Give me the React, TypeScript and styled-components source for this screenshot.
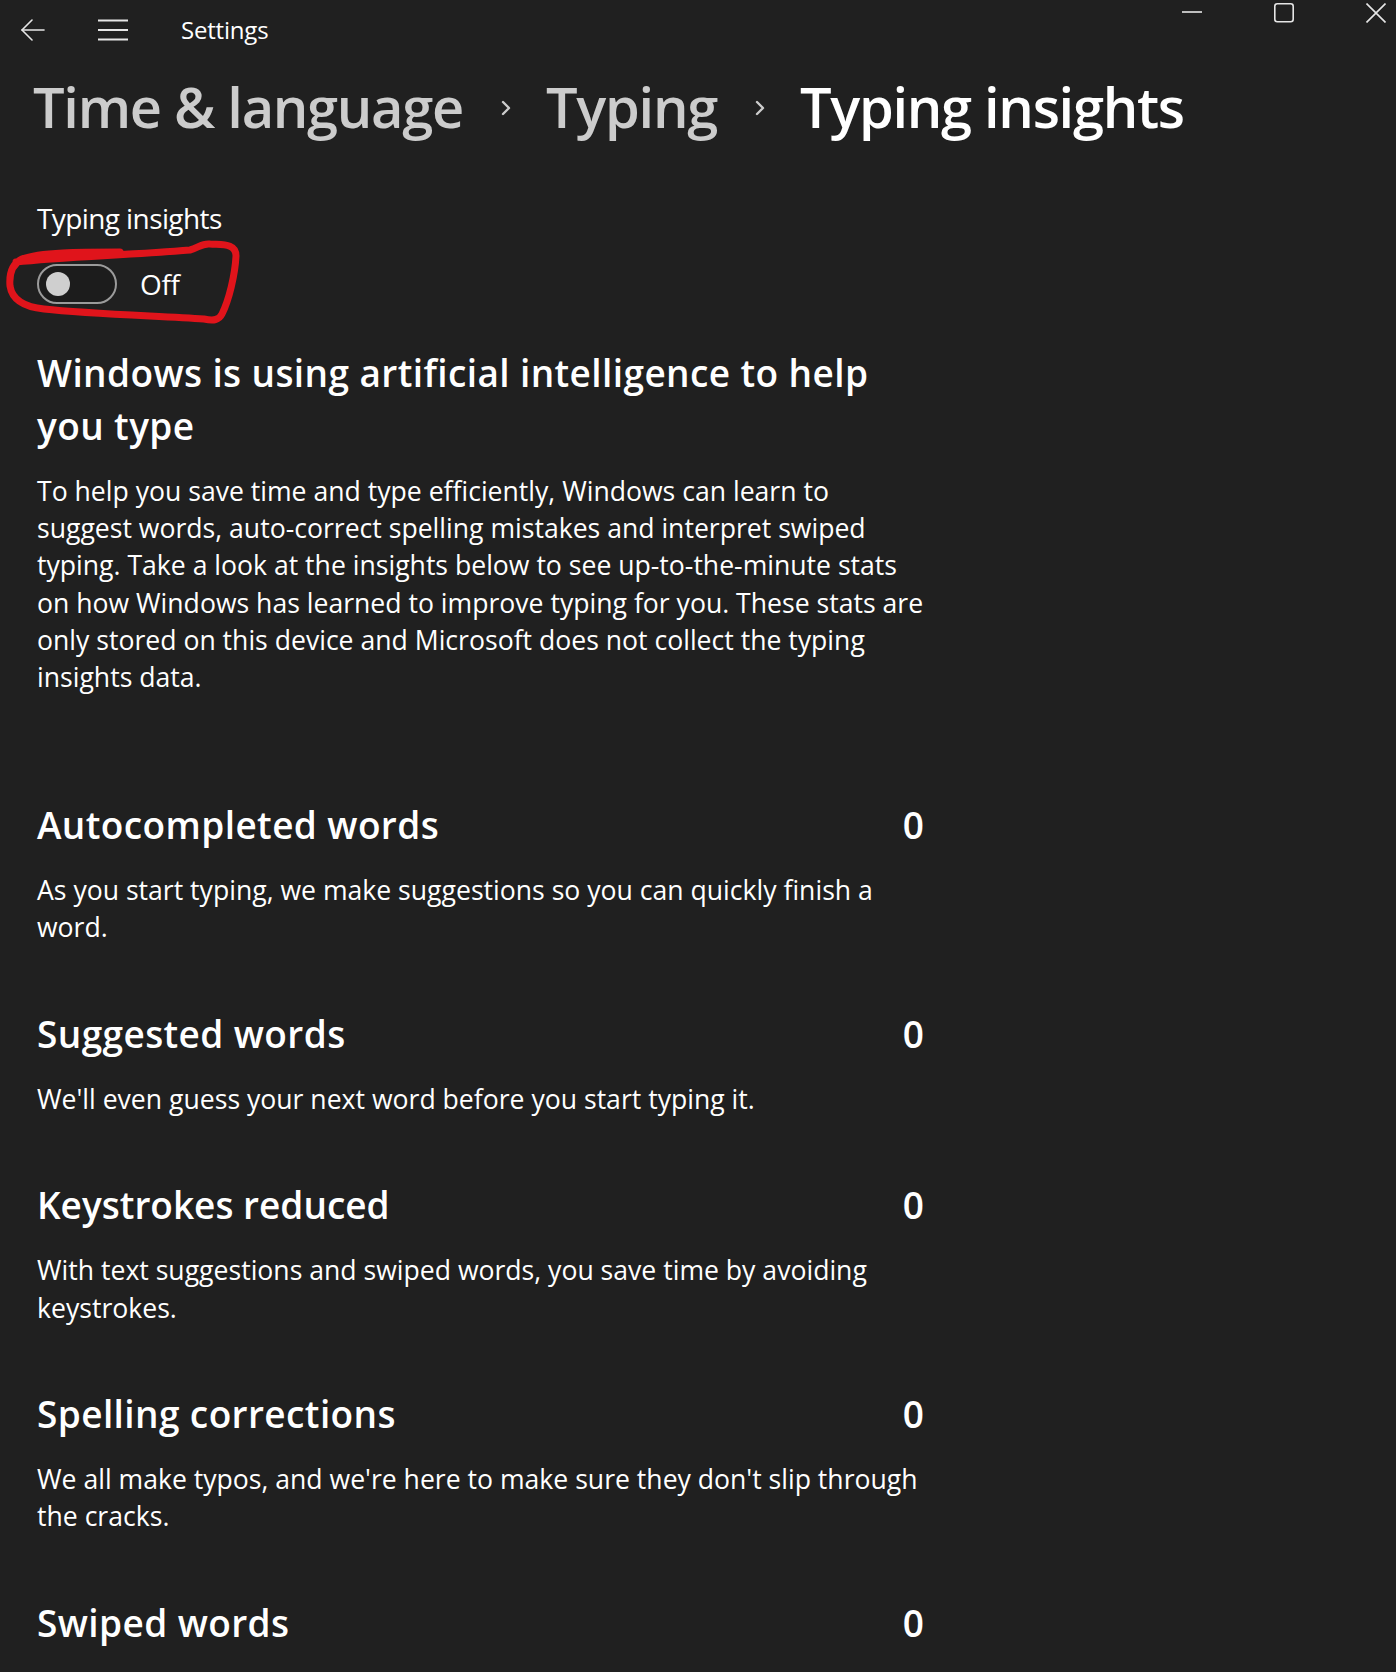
import React from "react";
import styled, { createGlobalStyle } from "styled-components";

const GlobalStyle = createGlobalStyle`
  html, body {
    margin: 0;
    padding: 0;
    background: #202020;
  }
  body {
    font-family: "Open Sans", "Noto Sans", "Liberation Sans", sans-serif;
    color: #ffffff;
    -webkit-font-smoothing: antialiased;
  }
  * { box-sizing: border-box; }
`;

const Page = styled.div`
  min-height: 1672px;
  background: #202020;
  overflow: hidden;
`;

const TitleBar = styled.header`
  display: flex;
  align-items: center;
  height: 60px;
  padding-left: 21px;
`;

const IconButton = styled.span<{ $gap?: number }>`
  display: flex;
  align-items: center;
  margin-right: ${(p) => p.$gap ?? 0}px;
  color: #e6e6e6;
`;

const AppTitle = styled.span`
  font-size: 24px;
  line-height: 60px;
  letter-spacing: -0.2px;
  color: #ffffff;
`;

const WindowControls = styled.div`
  display: flex;
  align-self: flex-start;
  margin-left: auto;
  padding-top: 3px;
  padding-right: 10px;
  gap: 72px;
  color: #e6e6e6;
`;

const Content = styled.main`
  padding-left: 37px;
  width: 924px;
`;

const Breadcrumb = styled.nav`
  display: flex;
  align-items: center;
  margin-top: 8px;
  margin-left: -4px;
  height: 76px;
  white-space: nowrap;
`;

const Crumb = styled.span<{ $current?: boolean }>`
  font-size: 56px;
  line-height: 76px;
  font-weight: 600;
  letter-spacing: -1.3px;
  color: ${(p) => (p.$current ? "#ffffff" : "#cccccc")};
`;

const CrumbChevron = styled.span`
  display: flex;
  align-items: center;
  margin: 4px 34px 0 37px;
  color: #cccccc;
`;

const FieldLabel = styled.div`
  margin-top: 54px;
  font-size: 28px;
  line-height: 40px;
  letter-spacing: -0.6px;
`;

const ToggleRow = styled.div`
  position: relative;
  display: flex;
  align-items: center;
  margin-top: 26px;
  height: 40px;
  gap: 23px;
`;

const Track = styled.span`
  display: flex;
  align-items: center;
  width: 80px;
  height: 40px;
  border: 2px solid #9b9b9b;
  border-radius: 20px;
  background: #1c1c1c;
  padding-left: 7px;
`;

const Knob = styled.span`
  width: 24px;
  height: 24px;
  border-radius: 50%;
  background: #cfcfcf;
`;

const ToggleText = styled.span`
  font-size: 28px;
  line-height: 40px;
  letter-spacing: -0.3px;
`;

const Annotation = styled.svg`
  position: absolute;
  left: -37px;
  top: -34px;
  width: 260px;
  height: 110px;
  pointer-events: none;
  overflow: visible;
`;

const Heading = styled.h2`
  margin: 42px 0 0 0;
  font-size: 37px;
  line-height: 53px;
  font-weight: 600;
  letter-spacing: 0.4px;
`;

const Paragraph = styled.p`
  margin: 21px 0 0 0;
  font-size: 26.6px;
  line-height: 37.2px;
  font-weight: 400;
`;

const Line = styled.span`
  display: block;
  white-space: nowrap;
`;

const Stats = styled.section`
  display: flex;
  flex-direction: column;
  margin-top: 102px;
  gap: 60.3px;
`;

const Stat = styled.div`
  display: flex;
  flex-direction: column;
  gap: 21px;
`;

const StatHeader = styled.div`
  display: flex;
  justify-content: space-between;
  align-items: center;
`;

const StatTitle = styled.h3<{ $tight?: boolean }>`
  margin: 0;
  font-size: 37px;
  line-height: 53px;
  font-weight: 600;
  letter-spacing: ${(p) => (p.$tight ? "0" : "0.4px")};
`;

const StatValue = styled.span`
  font-size: 37px;
  line-height: 53px;
  font-weight: 600;
`;

const StatDesc = styled.p`
  margin: 0;
  font-size: 26.6px;
  line-height: 37.2px;
`;

const BackIcon = () => (
  <svg width="24" height="22" viewBox="0 0 24 22" fill="none" stroke="currentColor" strokeWidth="1.6" strokeLinecap="round" strokeLinejoin="round">
    <path d="M1 11H23" />
    <path d="M11 1L1 11L11 21" />
  </svg>
);

const MenuIcon = () => (
  <svg width="30" height="22" viewBox="0 0 30 22" fill="none" stroke="currentColor" strokeWidth="2">
    <path d="M0 1.5H30" />
    <path d="M0 11H30" />
    <path d="M0 20.5H30" />
  </svg>
);

const MinimizeIcon = () => (
  <svg width="20" height="20" viewBox="0 0 20 20" fill="none" stroke="currentColor" strokeWidth="1.6">
    <path d="M0 9H20" />
  </svg>
);

const MaximizeIcon = () => (
  <svg width="20" height="20" viewBox="0 0 20 20" fill="none" stroke="currentColor" strokeWidth="1.6">
    <rect x="0.8" y="0.8" width="18.4" height="18" rx="2.5" />
  </svg>
);

const CloseIcon = () => (
  <svg width="20" height="20" viewBox="0 0 20 20" fill="none" stroke="currentColor" strokeWidth="1.6">
    <path d="M0.5 0.5L19.5 19.5M19.5 0.5L0.5 19.5" />
  </svg>
);

const Chevron = () => (
  <svg width="12" height="22" viewBox="0 0 12 22" fill="none" stroke="currentColor" strokeWidth="2.4" strokeLinecap="round" strokeLinejoin="round">
    <path d="M3 5L9 11L3 17" />
  </svg>
);

const headingLines = ["Windows is using artificial intelligence to help", "you type"];

const introLines = [
  "To help you save time and type efficiently, Windows can learn to",
  "suggest words, auto-correct spelling mistakes and interpret swiped",
  "typing. Take a look at the insights below to see up-to-the-minute stats",
  "on how Windows has learned to improve typing for you. These stats are",
  "only stored on this device and Microsoft does not collect the typing",
  "insights data.",
];

const stats: { title: string; value: number; desc: string[]; tight?: boolean }[] = [
  {
    title: "Autocompleted words",
    value: 0,
    desc: ["As you start typing, we make suggestions so you can quickly finish a", "word."],
  },
  {
    title: "Suggested words",
    value: 0,
    desc: ["We'll even guess your next word before you start typing it."],
  },
  {
    title: "Keystrokes reduced",
    value: 0,
    tight: true,
    desc: ["With text suggestions and swiped words, you save time by avoiding", "keystrokes."],
  },
  {
    title: "Spelling corrections",
    value: 0,
    desc: ["We all make typos, and we're here to make sure they don't slip through", "the cracks."],
  },
  {
    title: "Swiped words",
    value: 0,
    desc: [],
  },
];

export default function App() {
  return (
    <>
      <GlobalStyle />
      <Page>
        <TitleBar>
          <IconButton $gap={53}>
            <BackIcon />
          </IconButton>
          <IconButton $gap={53}>
            <MenuIcon />
          </IconButton>
          <AppTitle>Settings</AppTitle>
          <WindowControls>
            <MinimizeIcon />
            <MaximizeIcon />
            <CloseIcon />
          </WindowControls>
        </TitleBar>
        <Content>
          <Breadcrumb>
            <Crumb>Time &amp; language</Crumb>
            <CrumbChevron>
              <Chevron />
            </CrumbChevron>
            <Crumb>Typing</Crumb>
            <CrumbChevron>
              <Chevron />
            </CrumbChevron>
            <Crumb $current>Typing insights</Crumb>
          </Breadcrumb>

          <FieldLabel>Typing insights</FieldLabel>
          <ToggleRow>
            <Track>
              <Knob />
            </Track>
            <ToggleText>Off</ToggleText>
            <Annotation viewBox="0 230 260 110">
              <path
                d="M16 262 C 60 257, 130 255, 190 250 C 198 248, 202 243, 210 244 C 222 245, 236 243, 236 256 C 235 275, 229 300, 222 314 C 219 320, 214 321, 204 319 C 160 316, 90 314, 44 309 C 24 307, 12 299, 10 286 C 9 274, 12 264, 22 259 C 40 252, 80 252, 120 252"
                fill="none"
                stroke="#e0141b"
                strokeWidth="7"
                strokeLinecap="round"
                strokeLinejoin="round"
              />
            </Annotation>
          </ToggleRow>

          <Heading>
            {headingLines.map((l) => (
              <Line key={l}>{l}</Line>
            ))}
          </Heading>
          <Paragraph>
            {introLines.map((l) => (
              <Line key={l}>{l}</Line>
            ))}
          </Paragraph>

          <Stats>
            {stats.map((s) => (
              <Stat key={s.title}>
                <StatHeader>
                  <StatTitle $tight={s.tight}>{s.title}</StatTitle>
                  <StatValue>{s.value}</StatValue>
                </StatHeader>
                {s.desc.length > 0 && (
                  <StatDesc>
                    {s.desc.map((l) => (
                      <Line key={l}>{l}</Line>
                    ))}
                  </StatDesc>
                )}
              </Stat>
            ))}
          </Stats>
        </Content>
      </Page>
    </>
  );
}
